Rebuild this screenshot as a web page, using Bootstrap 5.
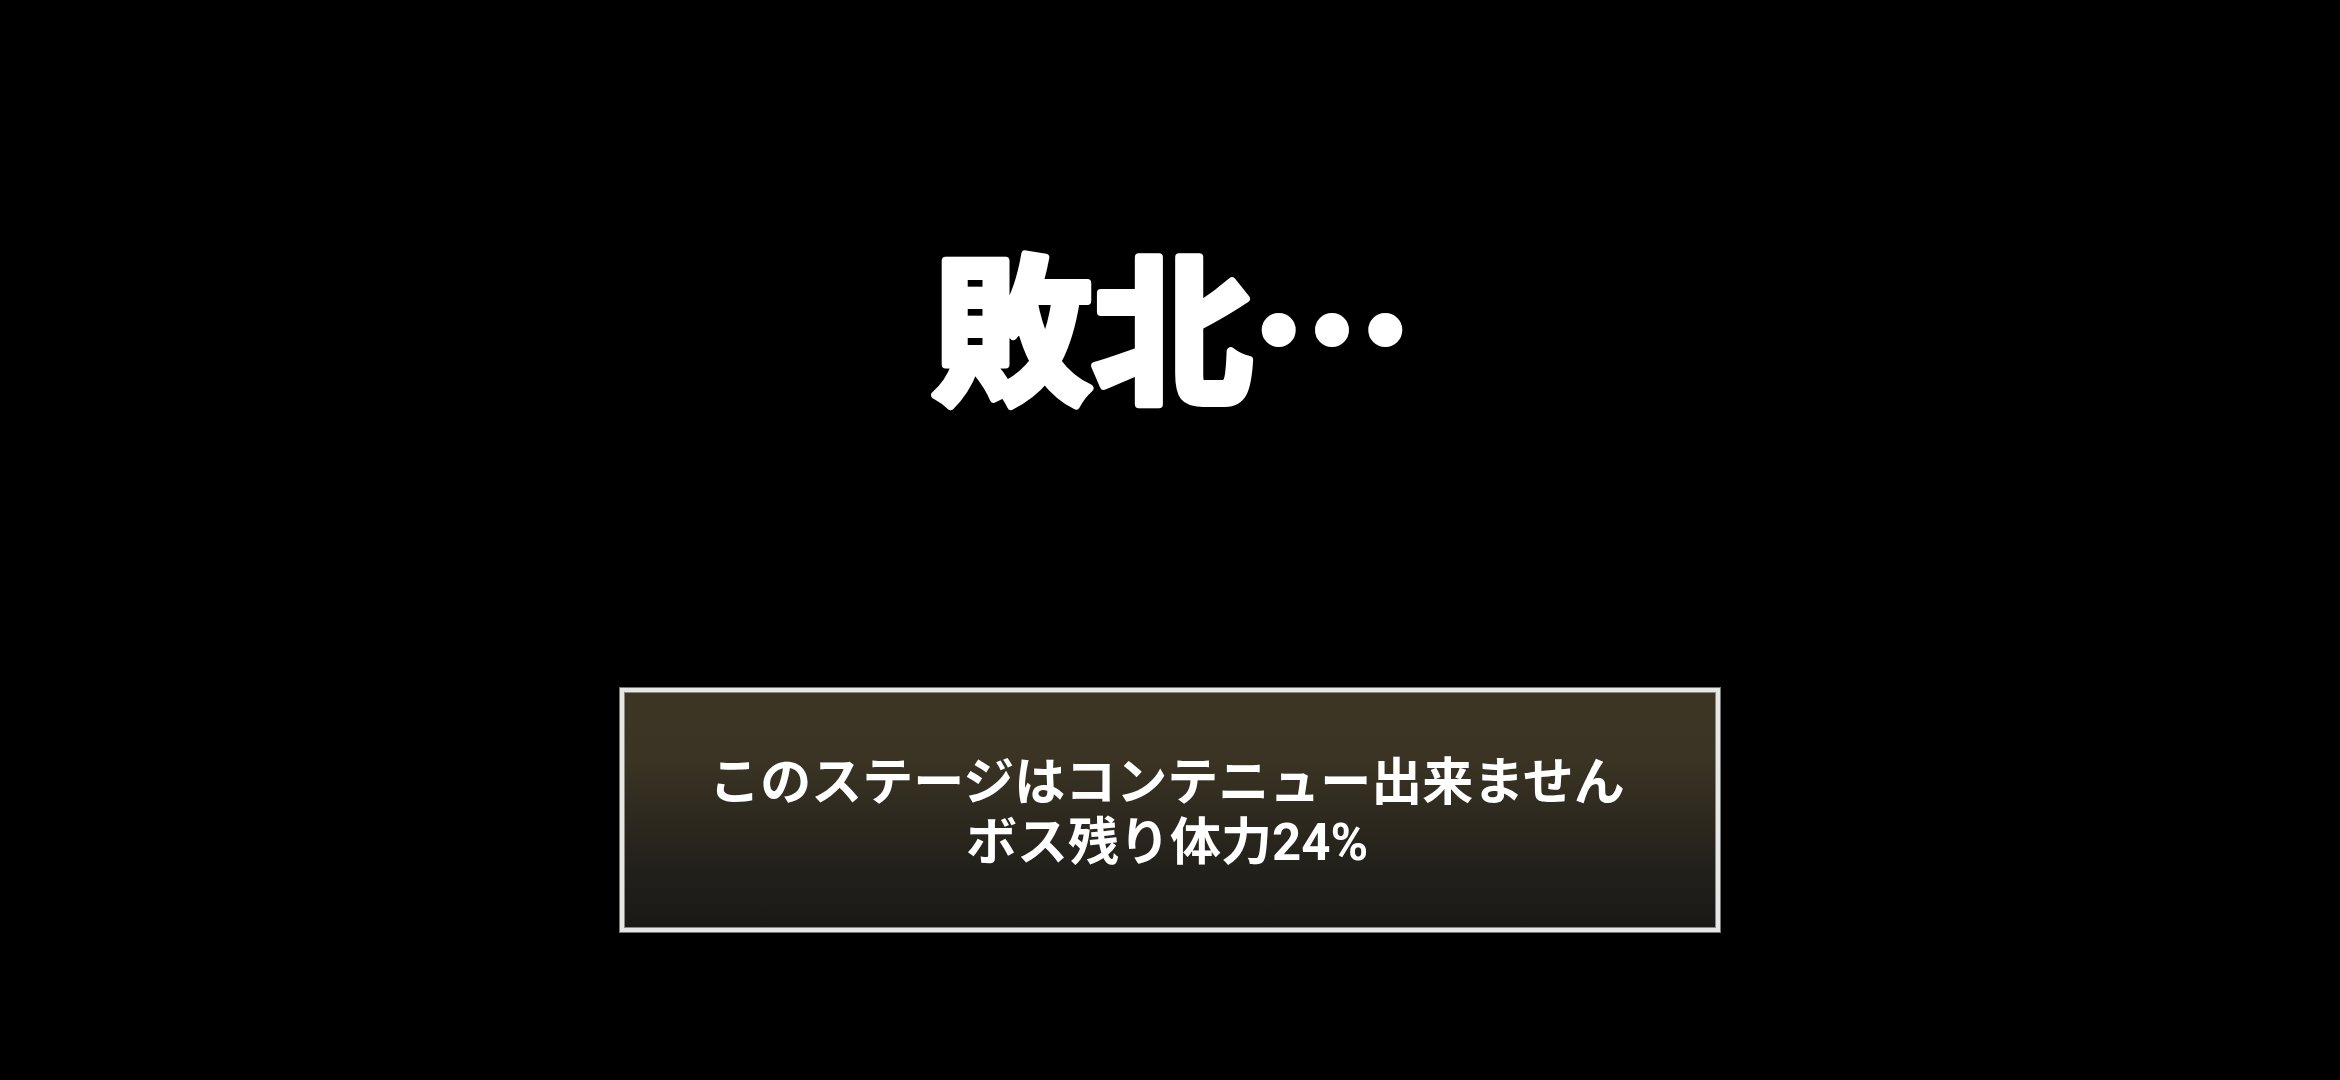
<!DOCTYPE html>
<html lang="ja">
<head>
<meta charset="utf-8">
<meta name="viewport" content="width=device-width, initial-scale=1">
<title>敗北…</title>
<link rel="stylesheet" href="https://cdn.jsdelivr.net/npm/bootstrap@5.3.0/dist/css/bootstrap.min.css">
<style>
  body { font-family: Roboto, "Noto Sans CJK JP", sans-serif; }
  .result-screen { padding-top: 180px; gap: 208px; }
  .result-title svg { width: 540px; height: 300px; }
  .result-title text {
    font-family: "Noto Sans CJK JP", sans-serif;
    font-size: 160px;
    font-weight: 700;
    text-anchor: middle;
    fill: #fff;
    stroke: #fff;
    stroke-width: 8px;
    stroke-linejoin: round;
  }
  .notice-panel {
    width: 47%;
    min-width: min-content;
    padding: 61px 30px 55px 24px;
    border: 4px solid #e6e6e4;
    outline: 1px solid #777775;
    background: linear-gradient(#3d3524 0%, #3b3424 28%, #22201b 75%, #1b1916 100%) padding-box;
    box-shadow: inset 0 0 0 1px #8a8882;
    font-size: 51px;
    line-height: 60px;
  }
</style>
</head>
<body class="bg-black text-white">
<main class="result-screen min-vh-100 d-flex flex-column align-items-center">
  <h1 class="result-title m-0">
    <svg class="d-block" viewBox="0 0 540 300"><text x="272" y="211">敗北…</text></svg>
  </h1>
  <section class="notice-panel text-center fw-bold text-nowrap">
    <p class="m-0">このステージはコンテニュー出来ません</p>
    <p class="m-0">ボス残り体力24%</p>
  </section>
</main>
<script src="https://cdn.jsdelivr.net/npm/bootstrap@5.3.0/dist/js/bootstrap.bundle.min.js"></script>
</body>
</html>
